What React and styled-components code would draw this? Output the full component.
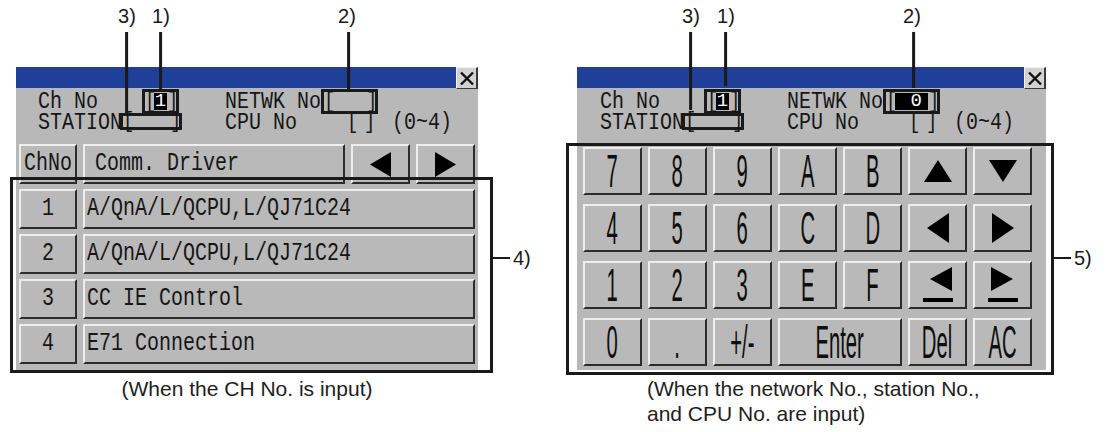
import styled, { createGlobalStyle } from "styled-components";

const GlobalStyle = createGlobalStyle`
  body {
    margin: 0;
    background: #ffffff;
  }
`;

const Page = styled.div`
  display: flex;
  width: 1108px;
  height: 432px;
  overflow: hidden;
  font-family: "Liberation Sans", Arial, sans-serif;
  color: #1a1a1a;
`;

const Figure = styled.div`
  position: relative;
  width: ${p => p.$w}px;
  padding: 67px 0 0 ${p => p.$left}px;
  box-sizing: border-box;
`;

const Screen = styled.div`
  width: ${p => p.$w}px;
  height: 303px;
  background: #b8b8b8;
  display: flex;
  flex-direction: column;
`;

const TitleBar = styled.div`
  display: flex;
  height: 21px;
`;

const TitleFill = styled.div`
  flex: 1;
  background: #1f3f99;
`;

const CloseBtn = styled.div`
  width: 22px;
  height: 22px;
  box-sizing: border-box;
  background: #d2d2d2;
  border-top: 1px solid #f2f2f2;
  border-left: 1px solid #f2f2f2;
  border-right: 2px solid #3a3a3a;
  border-bottom: 1px solid #3a3a3a;
  display: flex;
  align-items: center;
  justify-content: center;
`;

const Header = styled.div`
  height: ${p => p.$h}px;
  box-sizing: border-box;
  padding: 1px 0 0 ${p => p.$pad}px;
  display: grid;
  grid-template-columns: 187px 1fr;
  grid-template-rows: 24px 19px;
`;

const Cell = styled.div`
  display: flex;
  align-items: center;
`;

const Mono = styled.span`
  display: inline-block;
  font-family: "Liberation Mono", "DejaVu Sans Mono", monospace;
  font-size: 20px;
  line-height: 1;
  transform: scaleY(1.28);
  white-space: pre;
  color: #161616;
`;

const Label = styled(Mono)`
  width: ${p => p.$w}px;
  margin-left: ${p => p.$ml || 0}px;
  line-height: 17px;
  transform: scaleY(1.18);
  transform-origin: left center;
`;

const Field = styled.div`
  width: ${p => p.$w}px;
  height: ${p => p.$h}px;
  box-sizing: border-box;
  border: ${p => (p.$marked ? "3px solid #1a1a1a" : "none")};
  display: flex;
  align-items: center;
  justify-content: space-between;
  align-self: ${p => p.$align || "center"};
`;

const Bracket = styled(Mono)`
  width: 9px;
  text-align: center;
  font-size: 19px;
  line-height: 15px;
  transform: scaleY(1.15);
`;

const Hi = styled.span`
  display: flex;
  align-items: center;
  justify-content: ${p => p.$justify || "center"};
  flex: 1;
  align-self: stretch;
  margin: 1px 0;
  padding-right: ${p => p.$pr || 0}px;
  background: #000000;
  color: #ffffff;
  font-family: "Liberation Mono", "DejaVu Sans Mono", monospace;
  font-size: 19px;
  line-height: 1;
`;

const List = styled.div`
  display: grid;
  grid-template-columns: 58px 262px 59px 59px;
  grid-auto-rows: 40px;
  column-gap: 6px;
  row-gap: 5px;
  padding-left: 3px;
`;

const Button = styled.div`
  grid-column: ${p => p.$span || "auto"};
  box-sizing: border-box;
  background: #b9b9b9;
  border-top: 2px solid #eeeeee;
  border-left: 2px solid #eeeeee;
  border-right: 2px solid #2c2c2c;
  border-bottom: 2px solid #2c2c2c;
  display: flex;
  align-items: center;
  justify-content: ${p => p.$justify || "center"};
  padding-left: ${p => p.$pl || 0}px;
`;

const Keypad = styled.div`
  display: grid;
  grid-template-columns: repeat(7, 59px);
  grid-auto-rows: 48px;
  column-gap: 6px;
  row-gap: 9px;
  padding: 0 0 0 6px;
`;

const KeyText = styled.span`
  display: inline-block;
  font-family: "Liberation Sans", Arial, sans-serif;
  font-size: 44px;
  line-height: 38px;
  transform: scale(0.46, 1.04);
  color: #0e0e0e;
  white-space: pre;
`;

const Caption = styled.div`
  width: ${p => p.$w}px;
  margin: 6px 0 0 ${p => p.$ml || 0}px;
  font-size: 21px;
  line-height: 25px;
  text-align: ${p => p.$align || "center"};
  color: #1e1e1e;
  white-space: nowrap;
`;

const Callout = styled.div`
  position: absolute;
  left: ${p => p.$x}px;
  top: 5px;
  display: flex;
  flex-direction: column;
  align-items: center;
  transform: translateX(-50%);
`;

const CalloutLabel = styled.span`
  font-size: 20px;
  line-height: 22px;
  color: #1a1a1a;
  margin-left: ${p => p.$shift || 0}px;
`;

const Stem = styled.div`
  width: 3px;
  height: ${p => p.$h}px;
  margin-top: 5px;
  background: #1a1a1a;
`;

const Frame = styled.div`
  position: absolute;
  left: ${p => p.$x}px;
  top: ${p => p.$y}px;
  width: ${p => p.$w}px;
  height: ${p => p.$h}px;
  box-sizing: border-box;
  border: 3px solid #1a1a1a;
`;

const FrameTag = styled.div`
  position: absolute;
  left: 100%;
  top: ${p => p.$y}px;
  display: flex;
  align-items: center;
  gap: 3px;
`;

const TagLine = styled.div`
  width: 20px;
  height: 2px;
  background: #1a1a1a;
`;

const TagText = styled.span`
  font-size: 20px;
  line-height: 22px;
`;

function Tri({ dir, w = 22, h = 26, line = false }) {
  const pts = {
    left: `${w},0 ${w},${h} 0,${h / 2}`,
    right: `0,0 0,${h} ${w},${h / 2}`,
    up: `0,${h} ${w},${h} ${w / 2},0`,
    down: `0,0 ${w},0 ${w / 2},${h}`,
  }[dir];
  const total = line ? h + 12 : h;
  const lw = 30;
  return (
    <svg width={line ? lw : w} height={total} viewBox={`0 0 ${line ? lw : w} ${total}`}>
      <polygon
        points={pts}
        fill="#000"
        transform={line ? `translate(${(lw - w) / 2 + (dir === "left" ? 3 : -1)},0)` : undefined}
      />
      {line && <rect x="0" y={h + 7} width={lw} height="4" fill="#000" />}
    </svg>
  );
}

function CloseIcon() {
  return (
    <svg width="16" height="15" viewBox="0 0 16 15">
      <path d="M2 1.5 L14 13.5 M14 1.5 L2 13.5" stroke="#111" strokeWidth="2.4" />
    </svg>
  );
}

function Title() {
  return (
    <TitleBar>
      <TitleFill />
      <CloseBtn>
        <CloseIcon />
      </CloseBtn>
    </TitleBar>
  );
}

function InfoHeader({ h, pad, netwk }) {
  return (
    <Header $h={h} $pad={pad}>
      <Cell>
        <Label $w={104}>Ch No</Label>
        <Field $w={37} $h={25} $marked $align="start">
          <Bracket>[</Bracket>
          <Hi>1</Hi>
          <Bracket>]</Bracket>
        </Field>
      </Cell>
      <Cell>
        <Label $w={96}>NETWK No</Label>
        <Field $w={57} $h={25} $marked>
          <Bracket>[</Bracket>
          {netwk ? <Hi $justify="flex-end" $pr={6}>{netwk}</Hi> : null}
          <Bracket>]</Bracket>
        </Field>
      </Cell>
      <Cell>
        <Label $w={82}>STATION</Label>
        <Field $w={62} $h={17} $marked $align="start">
          <Bracket>[</Bracket>
          <Bracket>]</Bracket>
        </Field>
      </Cell>
      <Cell>
        <Label $w={122}>CPU No</Label>
        <Field $w={26} $h={17}>
          <Bracket>[</Bracket>
          <Bracket>]</Bracket>
        </Field>
        <Label $w={80} $ml={19}>(0~4)</Label>
      </Cell>
    </Header>
  );
}

const drivers = [
  "A/QnA/L/QCPU,L/QJ71C24",
  "A/QnA/L/QCPU,L/QJ71C24",
  "CC IE Control",
  "E71 Connection",
];

const keys = [
  ["7", "8", "9", "A", "B", { icon: "up" }, { icon: "down" }],
  ["4", "5", "6", "C", "D", { icon: "left" }, { icon: "right" }],
  ["1", "2", "3", "E", "F", { icon: "left", line: true }, { icon: "right", line: true }],
  ["0", ".", "+/-", { label: "Enter", span: 2 }, "Del", "AC"],
];

function Key({ k }) {
  if (typeof k === "string") {
    return (
      <Button>
        <KeyText>{k}</KeyText>
      </Button>
    );
  }
  if (k.label) {
    return (
      <Button $span={`span ${k.span}`}>
        <KeyText>{k.label}</KeyText>
      </Button>
    );
  }
  const vertical = k.icon === "up" || k.icon === "down";
  return (
    <Button>
      {vertical ? (
        <Tri dir={k.icon} w={28} h={22} />
      ) : k.line ? (
        <Tri dir={k.icon} w={22} h={24} line />
      ) : (
        <Tri dir={k.icon} w={22} h={30} />
      )}
    </Button>
  );
}

export default function App() {
  return (
    <Page>
      <GlobalStyle />
      <Figure $w={560} $left={16}>
        <Callout $x={127}>
          <CalloutLabel>3)</CalloutLabel>
          <Stem $h={81} />
        </Callout>
        <Callout $x={161}>
          <CalloutLabel>1)</CalloutLabel>
          <Stem $h={57} />
        </Callout>
        <Callout $x={349}>
          <CalloutLabel $shift={-4}>2)</CalloutLabel>
          <Stem $h={58} />
        </Callout>

        <Screen $w={462}>
          <Title />
          <InfoHeader h={56} pad={22} />
          <List>
            <Button>
              <Mono>ChNo</Mono>
            </Button>
            <Button $justify="flex-start" $pl={10}>
              <Mono>Comm. Driver</Mono>
            </Button>
            <Button>
              <Tri dir="left" w={21} h={25} />
            </Button>
            <Button>
              <Tri dir="right" w={21} h={25} />
            </Button>
            {drivers.map((d, i) => [
              <Button key={`n${i}`}>
                <Mono>{i + 1}</Mono>
              </Button>,
              <Button key={`d${i}`} $span="span 3" $justify="flex-start" $pl={2}>
                <Mono>{d}</Mono>
              </Button>,
            ])}
          </List>
        </Screen>
        <Caption $w={462}>(When the CH No. is input)</Caption>

        <Frame $x={10} $y={177} $w={483} $h={196}>
          <FrameTag $y={67}>
            <TagLine />
            <TagText>4)</TagText>
          </FrameTag>
        </Frame>
      </Figure>

      <Figure $w={548} $left={17}>
        <Callout $x={131}>
          <CalloutLabel>3)</CalloutLabel>
          <Stem $h={78} />
        </Callout>
        <Callout $x={166}>
          <CalloutLabel>1)</CalloutLabel>
          <Stem $h={54} />
        </Callout>
        <Callout $x={354}>
          <CalloutLabel $shift={-4}>2)</CalloutLabel>
          <Stem $h={56} />
        </Callout>

        <Screen $w={469}>
          <Title />
          <InfoHeader h={59} pad={23} netwk="0" />
          <Keypad>
            {keys.map((row, r) =>
              row.map((k, c) => <Key key={`${r}-${c}`} k={k} />)
            )}
          </Keypad>
        </Screen>
        <Caption $w={400} $ml={70} $align="left">
          (When the network No., station No.,
          <br />
          and CPU No. are input)
        </Caption>

        <Frame $x={6} $y={143} $w={488} $h={232}>
          <FrameTag $y={101}>
            <TagLine />
            <TagText>5)</TagText>
          </FrameTag>
        </Frame>
      </Figure>
    </Page>
  );
}
